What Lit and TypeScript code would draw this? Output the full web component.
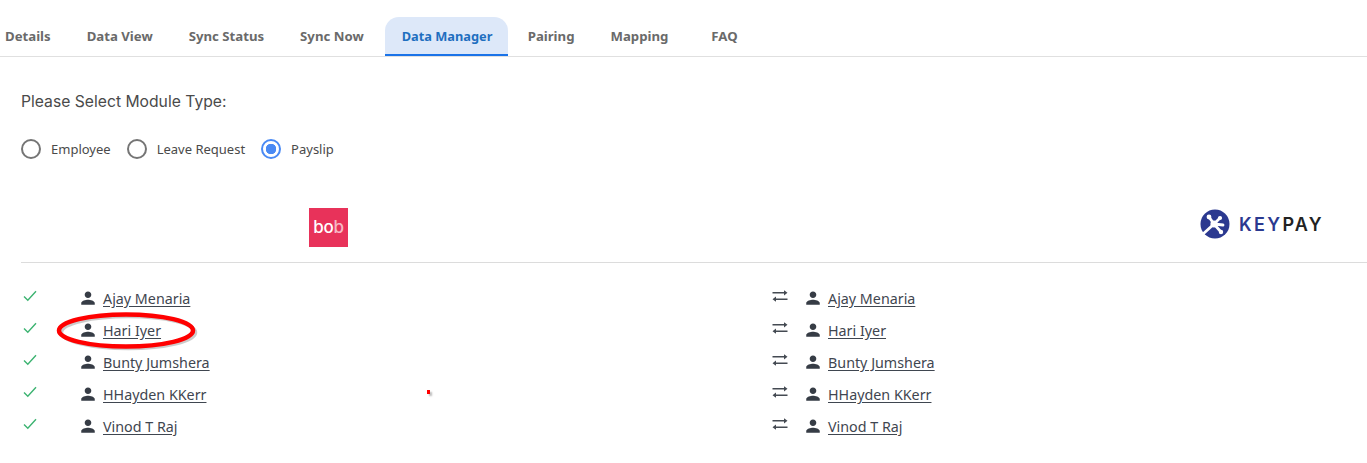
import { LitElement, html, css } from "lit";
import { customElement } from "lit/decorators.js";

const TABS = ["Details", "Data View", "Sync Status", "Sync Now", "Data Manager", "Pairing", "Mapping", "FAQ"];
const NAMES = ["Ajay Menaria", "Hari Iyer", "Bunty Jumshera", "HHayden KKerr", "Vinod T Raj"];
const MODULES = ["Employee", "Leave Request", "Payslip"];

const person = html`<svg class="person" viewBox="0 0 24 24"><path d="M12 12c2.600 0 4.400-2 4.400-4.400S14.600 3.200 12 3.200 7.600 5.200 7.600 7.600 9.400 12 12 12zm0 2.200c-3 0-9 1.500-9 4.500v2.300h18v-2.300c0-3-6-4.500-9-4.500z"/></svg>`;
const check = html`<svg class="check" viewBox="0 0 14 12"><path d="M1 6.500 4.800 10.200 13 1.300" fill="none" stroke="#3cb371" stroke-width="1.400"/></svg>`;
const swap = html`<svg class="swap" viewBox="0 0 16 12"><path d="M.5 2.800H12.500M15.500 9.200H3.500" fill="none" stroke="#444a52" stroke-width="1.500"/><path d="M12 .2 15.500 2.800 12 5.400zM4 6.600 .5 9.200 4 11.800z" fill="#444a52"/></svg>`;

@customElement("app-root")
export class AppRoot extends LitElement {
  static styles = css`
    :host { display: block; width: 1367px; height: 463px; position: relative; overflow: hidden; background: #fff; font-family: "Noto Sans", sans-serif; color: #3f4650; }
    .tabs { display: flex; height: 39px; margin-top: 17px; border-bottom: 1px solid #e0e0e0; position: absolute; top: 0; left: 0; right: 0; }
    .tab { box-sizing: border-box; height: 39px; display: flex; align-items: center; padding: 0 18px; font-size: 13.200px; font-weight: 700; color: #6a6a6a; white-space: nowrap; padding-bottom: 2px; }
    .tab:first-child { padding-left: 5px; }
    .tab:last-child { padding-left: 25px; }
    .tab.active { background: #dde8f9; color: #1f6fc0; border-radius: 14px 14px 0 0; border-bottom: 2px solid #1a73e8; padding: 0 16px 0 17px; font-size: 12.800px; width: 123px; margin-left: 3px; margin-right: 2px; }
    .content { padding: 91px 0 0 21px; }
    .title { font-family: Inter, sans-serif; font-size: 15.700px; line-height: 22px; color: #4a4a4a; }
    .radios { display: flex; align-items: center; margin-top: 25px; height: 22px; }
    .radio { display: flex; align-items: center; gap: 10px; margin-right: 16px; font-size: 13px; color: #4a4a4a; }
    .dot { box-sizing: border-box; width: 20px; height: 20px; border-radius: 50%; border: 2px solid #757575; background: #fff; }
    .dot.on { border-color: #4a8af4; background: radial-gradient(circle, #4a8af4 0 5px, #fff 5.500px); }
    .logos { display: flex; justify-content: space-between; height: 40px; margin-top: 48px; padding: 0 44px 0 288px; }
    .bob { width: 39px; height: 39px; background: #e8325a; display: flex; align-items: center; justify-content: center; color: #fff; font-family: Inter, sans-serif; font-size: 17px; font-weight: 500; letter-spacing: -0.200px; padding-bottom: 2px; box-sizing: border-box; }
    .bob span { opacity: .65; }
    .keypay { display: flex; align-items: center; gap: 9px; font-family: Inter, sans-serif; font-size: 18px; font-weight: 600; letter-spacing: 2.300px; color: #222; height: 34px; margin-top: -1px; margin-right: -1px; }
    .keypay b { font-weight: 600; color: #2b3990; }
    .keypay svg { width: 30px; height: 30px; }
    hr { border: 0; border-top: 1px solid #dcdcdc; margin: 14px 0 0 0; }
    .rows { margin-top: 19px; display: grid; grid-template-columns: 751px 1fr; grid-auto-rows: 32px; }
    .cell { display: flex; align-items: center; height: 32px; }
    .check { width: 14px; height: 12px; margin: -5px 0 0 2px; flex: none; }
    .swap { width: 16px; height: 12px; margin-top: -5px; flex: none; }
    .gapl { width: 42px; flex: none; }
    .gapr { width: 16px; flex: none; }
    .person { width: 18px; height: 18px; fill: #363c45; margin-right: 6px; flex: none; }
    a { font-size: 14.300px; color: #3f4650; text-decoration: underline; text-underline-offset: 2px; }
    .note { position: absolute; left: 55px; top: 310px; }
    .speck { position: absolute; left: 427px; top: 390px; width: 3px; height: 4px; background: #f00; box-shadow: 2px 2px 2px #bbb; }
  `;

  render() {
    return html`
      <div class="tabs">
        ${TABS.map((t) => html`<div class="tab ${t === "Data Manager" ? "active" : ""}">${t}</div>`)}
      </div>
      <div class="content">
        <div class="title">Please Select Module Type:</div>
        <div class="radios">
          ${MODULES.map((m) => html`<label class="radio"><span class="dot ${m === "Payslip" ? "on" : ""}"></span>${m}</label>`)}
        </div>
        <div class="logos">
          <div class="bob">bo<span>b</span></div>
          <div class="keypay">
            <svg viewBox="0 0 30 30">
              <circle cx="15" cy="15" r="14.500" fill="#2b3990" />
              <path d="M14 15 9 8M14 15 20 9M14 15 23 16M14 15 21 23M14 15 3 25" fill="none" stroke="#fff" stroke-width="2.800" stroke-linecap="round" />
              <circle cx="14" cy="15" r="3.600" fill="#fff" />
              <circle cx="9" cy="8" r="2.400" fill="#fff" />
              <circle cx="20" cy="9" r="2.100" fill="#fff" />
              <circle cx="21" cy="23" r="2.200" fill="#fff" />
            </svg>
            <span><b>KEY</b>PAY</span>
          </div>
        </div>
        <hr />
        <div class="rows">
          ${NAMES.map((n) => html`
            <div class="cell">${check}<span class="gapl"></span>${person}<a>${n}</a></div>
            <div class="cell">${swap}<span class="gapr"></span>${person}<a>${n}</a></div>
          `)}
        </div>
      </div>
      <svg class="note" width="146" height="44" viewBox="0 0 146 44">
        <ellipse cx="73.500" cy="22.500" rx="67" ry="16" fill="none" stroke="#aaa" stroke-width="3.500" opacity=".6" />
        <ellipse cx="71" cy="20.500" rx="67" ry="16" fill="none" stroke="#f00" stroke-width="4.500" />
      </svg>
      <div class="speck"></div>
    `;
  }
}
